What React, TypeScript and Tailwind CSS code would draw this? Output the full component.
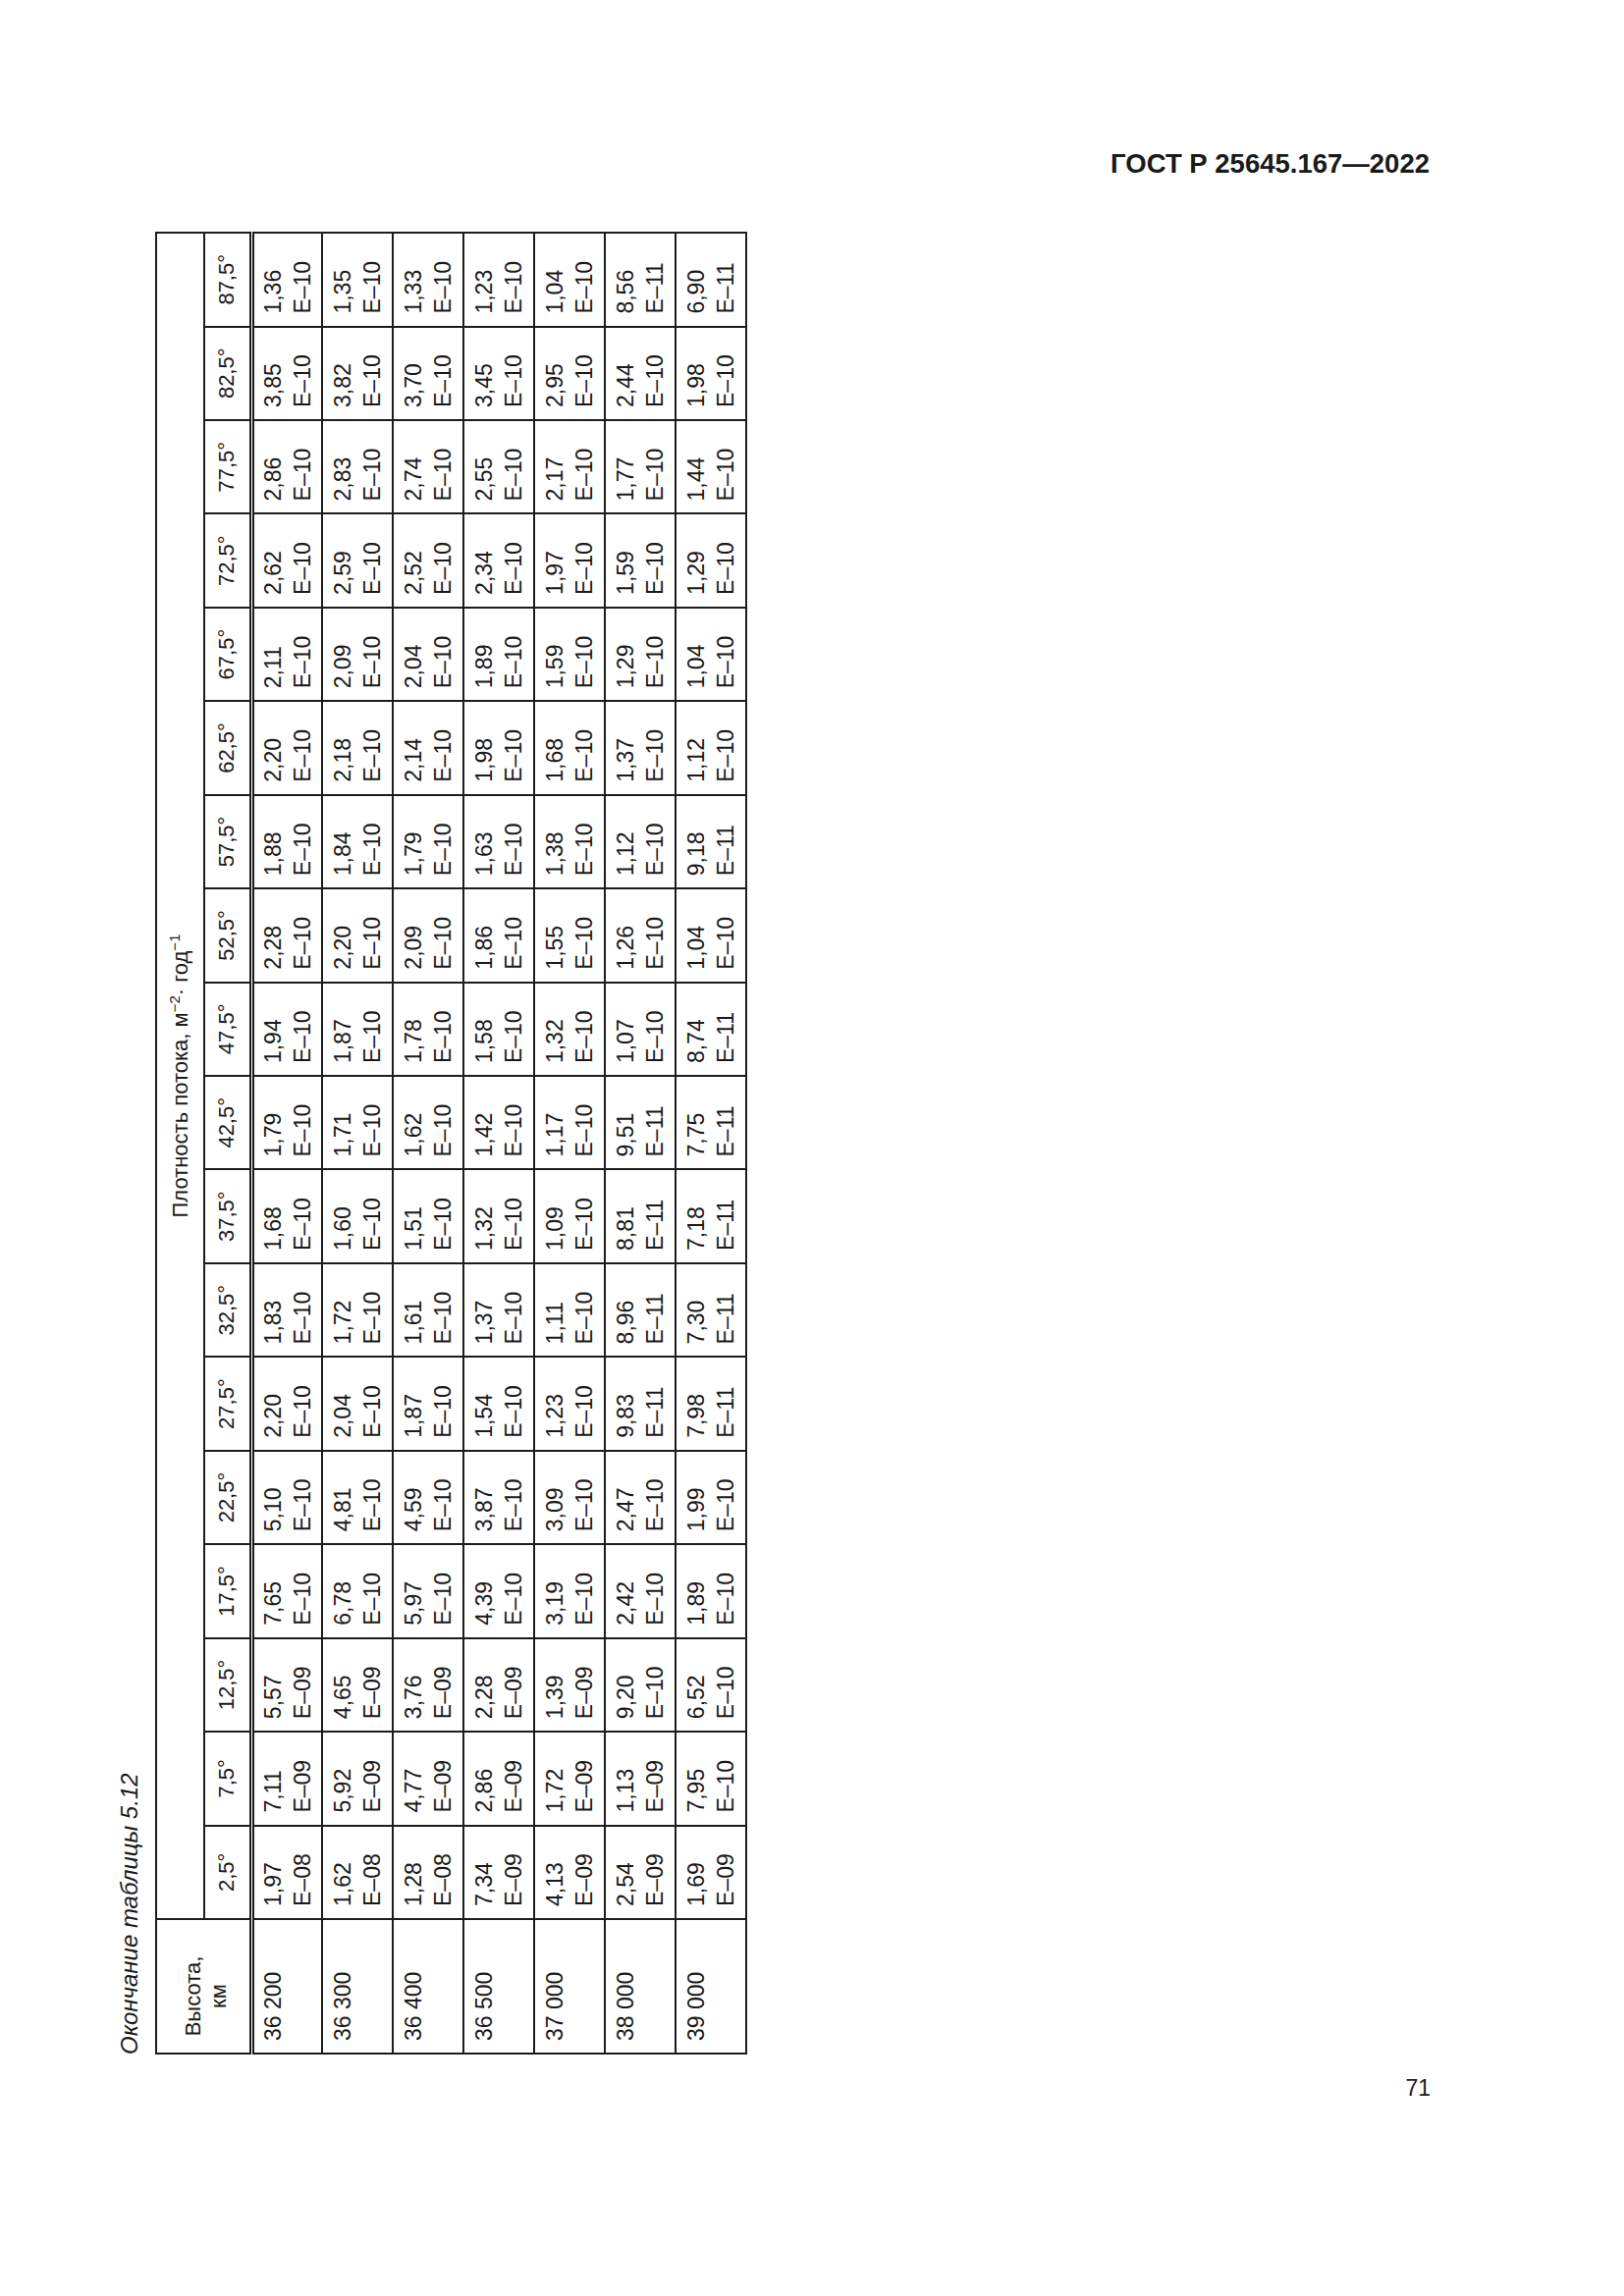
const angles = [
  '2,5', '7,5', '12,5', '17,5', '22,5', '27,5', '32,5', '37,5', '42,5',
  '47,5', '52,5', '57,5', '62,5', '67,5', '72,5', '77,5', '82,5', '87,5',
];

// mantissa + exponent pairs, one string per altitude
const rows: { h: string; v: string }[] = [
  { h: '36 200', v: '1,97 08 7,11 09 5,57 09 7,65 10 5,10 10 2,20 10 1,83 10 1,68 10 1,79 10 1,94 10 2,28 10 1,88 10 2,20 10 2,11 10 2,62 10 2,86 10 3,85 10 1,36 10' },
  { h: '36 300', v: '1,62 08 5,92 09 4,65 09 6,78 10 4,81 10 2,04 10 1,72 10 1,60 10 1,71 10 1,87 10 2,20 10 1,84 10 2,18 10 2,09 10 2,59 10 2,83 10 3,82 10 1,35 10' },
  { h: '36 400', v: '1,28 08 4,77 09 3,76 09 5,97 10 4,59 10 1,87 10 1,61 10 1,51 10 1,62 10 1,78 10 2,09 10 1,79 10 2,14 10 2,04 10 2,52 10 2,74 10 3,70 10 1,33 10' },
  { h: '36 500', v: '7,34 09 2,86 09 2,28 09 4,39 10 3,87 10 1,54 10 1,37 10 1,32 10 1,42 10 1,58 10 1,86 10 1,63 10 1,98 10 1,89 10 2,34 10 2,55 10 3,45 10 1,23 10' },
  { h: '37 000', v: '4,13 09 1,72 09 1,39 09 3,19 10 3,09 10 1,23 10 1,11 10 1,09 10 1,17 10 1,32 10 1,55 10 1,38 10 1,68 10 1,59 10 1,97 10 2,17 10 2,95 10 1,04 10' },
  { h: '38 000', v: '2,54 09 1,13 09 9,20 10 2,42 10 2,47 10 9,83 11 8,96 11 8,81 11 9,51 11 1,07 10 1,26 10 1,12 10 1,37 10 1,29 10 1,59 10 1,77 10 2,44 10 8,56 11' },
  { h: '39 000', v: '1,69 09 7,95 10 6,52 10 1,89 10 1,99 10 7,98 11 7,30 11 7,18 11 7,75 11 8,74 11 1,04 10 9,18 11 1,12 10 1,04 10 1,29 10 1,44 10 1,98 10 6,90 11' },
];

function pairs(v: string): [string, string][] {
  const parts = v.split(' ');
  const out: [string, string][] = [];
  for (let i = 0; i < parts.length; i += 2) out.push([parts[i], parts[i + 1]]);
  return out;
}

function FluxTable(): React.ReactElement {
  return (
    <table className="w-[1857px] h-[601px] table-fixed border-collapse text-[#1a1a1a]">
      <colgroup>
        <col className="w-[137px]" />
        {angles.map(a => (
          <col key={a} />
        ))}
      </colgroup>
      <thead>
        <tr className="h-[49px]">
          <th
            rowSpan={2}
            className="border-2 border-double border-b-[5px] border-[#1c1c1c] pr-[20px] pt-[6px] text-center align-middle text-[22px] leading-[26px] font-normal"
          >
            Высота,
            <br />
            км
          </th>
          <th
            colSpan={18}
            className="border-2 border-[#1c1c1c] text-center align-middle text-[22px] leading-[28px] font-normal"
          >
            Плотность потока, м<sup className="text-[15px]">−2</sup>· год<sup className="text-[15px]">−1</sup>
          </th>
        </tr>
        <tr className="h-[48px]">
          {angles.map(a => (
            <th
              key={a}
              className="border-2 border-double border-b-[5px] border-[#1c1c1c] text-center align-middle text-[22px] leading-[28px] font-normal"
            >
              {a}°
            </th>
          ))}
        </tr>
      </thead>
      <tbody>
        {rows.map(r => (
          <tr key={r.h} className="h-[72px]">
            <td className="border-2 border-[#1c1c1c] pl-[12px] align-middle text-[23px] leading-[30px]">
              {r.h}
              <br />
              {'\u00a0'}
            </td>
            {pairs(r.v).map(([m, e], i) => (
              <td
                key={i}
                className="border-2 border-[#1c1c1c] pl-[12px] align-middle text-[23px] leading-[30px]"
              >
                {m}
                <br />
                E–{e}
              </td>
            ))}
          </tr>
        ))}
      </tbody>
    </table>
  );
}

export default function App(): React.ReactElement {
  return (
    <div className="flex h-[2339px] w-[1654px] flex-col bg-white font-['Liberation_Sans',Arial,sans-serif] text-[#1a1a1a]">
      <div className="flex justify-end pt-[151px] pr-[198px] text-[27.5px] font-bold leading-[32px]">
        ГОСТ Р 25645.167—2022
      </div>

      <div className="ml-[118px] mt-[53px] flex h-[1857px] w-[641px] items-center justify-center">
        <div className="flex h-[641px] w-[1857px] shrink-0 -rotate-90 flex-col">
          <p className="mb-[12px] text-[24px] italic leading-[28px]">Окончание таблицы 5.12</p>
          <FluxTable />
        </div>
      </div>

      <div className="mt-[20px] flex justify-end pr-[197px] text-[23px] leading-[28px]">71</div>
    </div>
  );
}
